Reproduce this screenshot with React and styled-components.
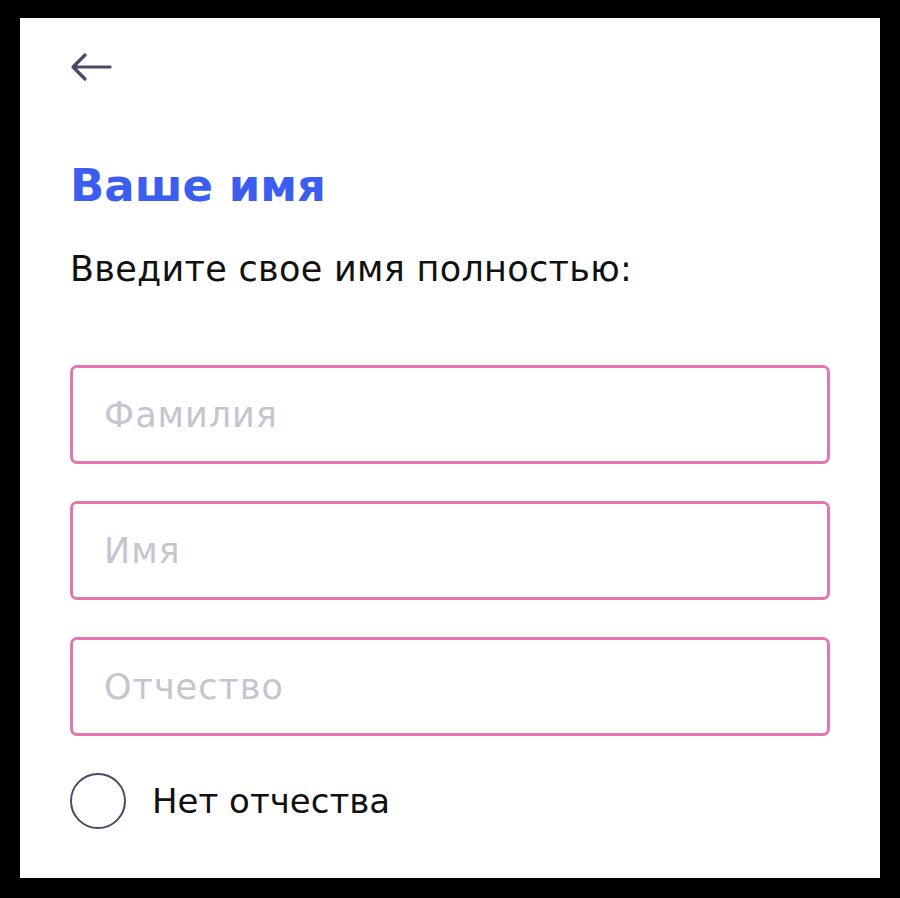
import React, { useState } from "react";
import styled, { createGlobalStyle } from "styled-components";

const GlobalStyle = createGlobalStyle`
	html, body {
		margin: 0;
		padding: 0;
		background: #000;
	}
	body {
		padding: 18px 20px 20px;
		font-family: "DejaVu Sans", Inter, sans-serif;
	}
`;

const fields = ["Фамилия", "Имя", "Отчество"];

function App() {
	const [noMiddle, setNoMiddle] = useState(false);

	return (
		<>
			<GlobalStyle />
			<Panel>
				<BackBtn type="button" aria-label="Назад">
					<svg width="42" height="30" viewBox="0 0 42 30" fill="none">
						<path
							d="M40 15H3M15 3L3 15l12 12"
							stroke="#4a4966"
							strokeWidth="3.2"
							strokeLinecap="round"
							strokeLinejoin="round"
						/>
					</svg>
				</BackBtn>
				<Title>Ваше имя</Title>
				<Subtitle>Введите свое имя полностью:</Subtitle>
				<Fields>
					{fields.map((f) => (
						<Field key={f} placeholder={f} disabled={f === "Отчество" && noMiddle} />
					))}
				</Fields>
				<CheckRow>
					<Radio
						type="checkbox"
						checked={noMiddle}
						onChange={() => setNoMiddle(!noMiddle)}
					/>
					<CheckText>Нет отчества</CheckText>
				</CheckRow>
			</Panel>
		</>
	);
}

const Panel = styled.div`
	background: #fff;
	height: 860px;
	box-sizing: border-box;
	padding: 34px 50px 0;
	display: flex;
	flex-direction: column;
`;

const BackBtn = styled.button`
	align-self: flex-start;
	background: none;
	border: 0;
	padding: 0;
	cursor: pointer;
	display: flex;
	svg {
		display: block;
	}
`;

const Title = styled.h1`
	margin: 76px 0 0;
	font-size: 45px;
	line-height: 56px;
	font-weight: 700;
	color: #3b5ef0;
`;

const Subtitle = styled.p`
	margin: 33px 0 0;
	font-size: 35px;
	line-height: 44px;
	letter-spacing: 0.3px;
	font-weight: 400;
	color: #111;
`;

const Fields = styled.div`
	margin-top: 74px;
	display: flex;
	flex-direction: column;
	gap: 37px;
`;

const Field = styled.input`
	box-sizing: border-box;
	width: 100%;
	height: 99px;
	border: 3px solid #e277b0;
	border-radius: 7px;
	padding: 0 31px;
	font-family: inherit;
	font-size: 35px;
	letter-spacing: 1px;
	color: #222;
	outline: none;
	background: #fff;
	&::placeholder {
		color: #c5c4cf;
	}
`;

const CheckRow = styled.label`
	margin-top: 37px;
	display: flex;
	align-items: center;
	gap: 26px;
	cursor: pointer;
`;

const Radio = styled.input`
	appearance: none;
	margin: 0;
	width: 56px;
	height: 56px;
	border: 2px solid #4a4966;
	border-radius: 50%;
	box-sizing: border-box;
	cursor: pointer;
	&:checked {
		background: radial-gradient(circle, #3b5ef0 0 40%, transparent 42%);
	}
`;

const CheckText = styled.span`
	font-size: 34px;
	color: #111;
`;

export default App;
